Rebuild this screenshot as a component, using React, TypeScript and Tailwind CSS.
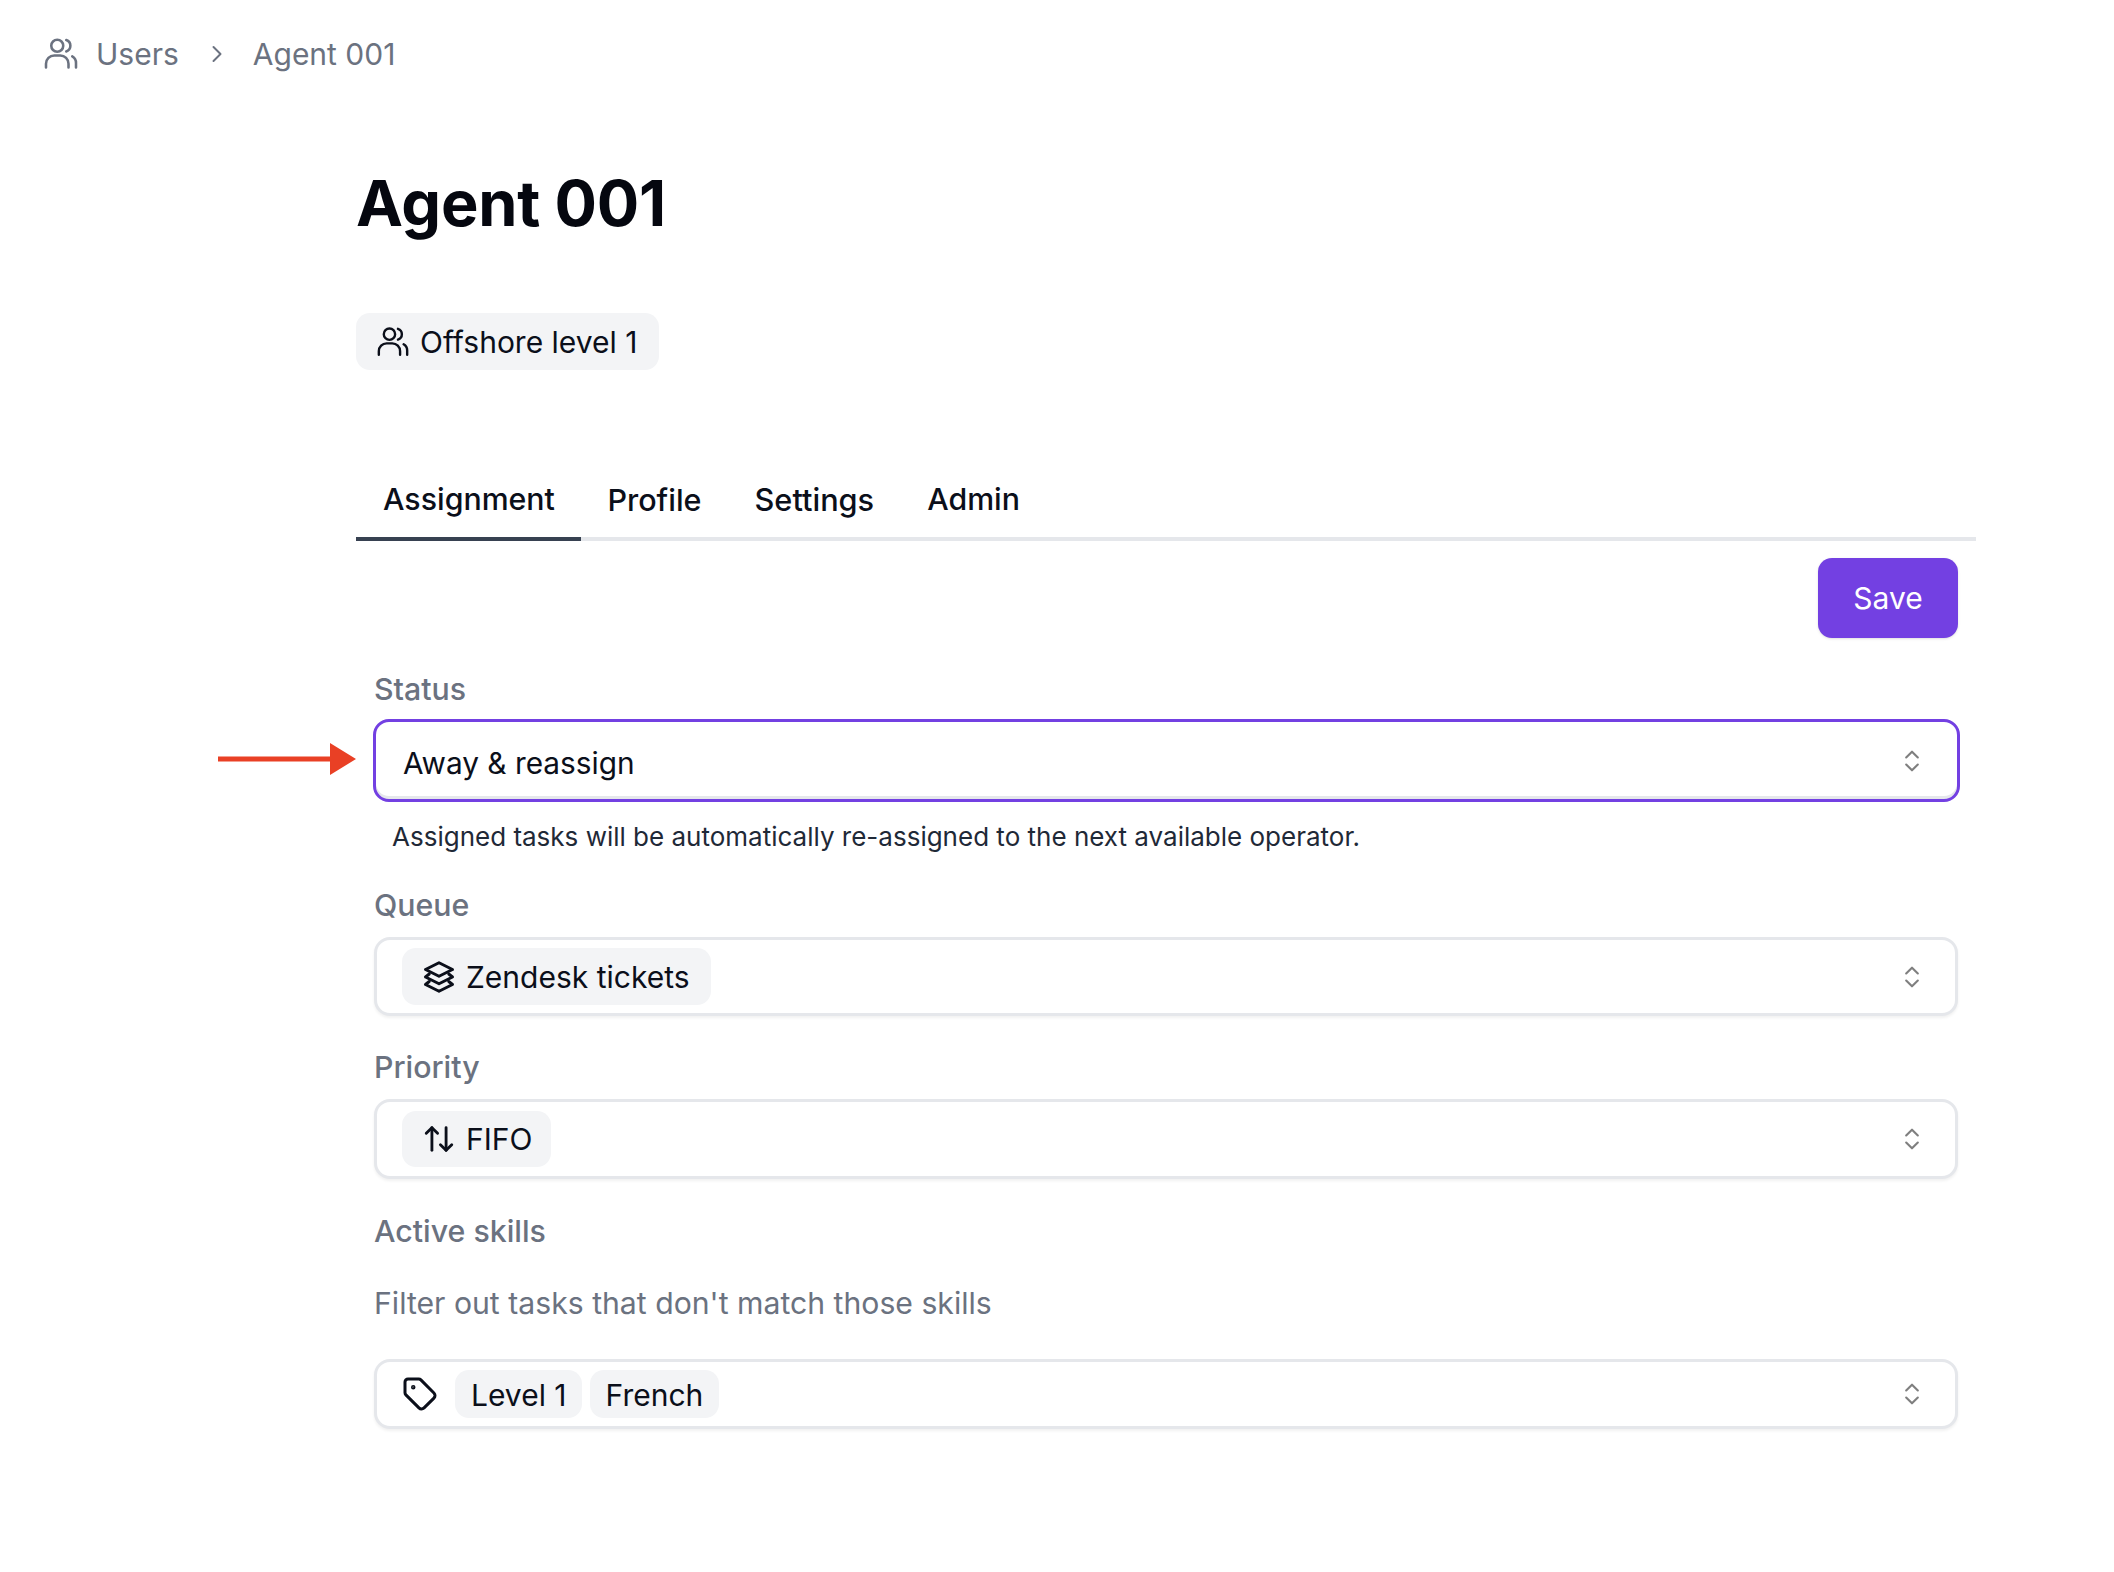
import { ArrowUpDown, ChevronRight, ChevronsUpDown, Tag } from "lucide-react";
import type { ReactNode } from "react";

function PeopleIcon({ size, className }: { size: number; className?: string }) {
  return (
    <svg className={className} width={size} height={size} viewBox="0 0 24 24" fill="none" stroke="currentColor" strokeWidth="1.7" strokeLinecap="round" strokeLinejoin="round">
      <circle cx="9.5" cy="6.5" r="4" />
      <path d="M2 21v-2.5A5.5 5.5 0 0 1 7.5 13h4a5.5 5.5 0 0 1 5.5 5.5V21" />
      <path d="M15.5 2.7a4 4 0 0 1 0 7.6" />
      <path d="M19.5 13.6A5 5 0 0 1 22 18v3" />
    </svg>
  );
}

function LayersIcon() {
  return (
    <svg width="36" height="36" viewBox="0 0 24 24" fill="none" stroke="currentColor" strokeWidth="2" strokeLinejoin="round" strokeLinecap="round">
      <path d="M12 2.5 21 7l-9 4.5L3 7l9-4.5Z" />
      <path d="M5.5 10 3 12l9 4.5 9-4.5-2.5-2" />
      <path d="M5.5 15 3 17l9 4.5 9-4.5-2.5-2" />
    </svg>
  );
}

function Chip({ children, className }: { children: ReactNode; className: string }) {
  return <span className={`flex items-center rounded-[14px] bg-[#f3f4f6] text-[30px] text-[#0b0f1a] ${className}`}>{children}</span>;
}

function SelectBox({ children, className, chevron }: { children: ReactNode; className: string; chevron: string }) {
  return (
    <div className={`flex items-center justify-between rounded-[16px] bg-white shadow-[0_2px_3px_rgba(0,0,0,0.06)] ${className}`}>
      <div className="flex items-center">{children}</div>
      <ChevronsUpDown className={`text-[#7f7f7f] ${chevron}`} size={28} strokeWidth={1.8} />
    </div>
  );
}

export default function App() {
  return (
    <div className="h-[1572px] w-full overflow-hidden bg-white font-['Inter',sans-serif]">
      <div className="flex h-[108px] items-center pl-[43px] text-[30px] text-[#6b7280]">
        <PeopleIcon size={36} />
        <span className="ml-[17px]">Users</span>
        <ChevronRight className="ml-[24px]" size={28} strokeWidth={1.7} />
        <span className="ml-[22px]">Agent 001</span>
      </div>

      <div className="ml-[356px] w-[1620px]">
        <h1 className="mt-[50px] text-[63px] font-bold leading-[90px] tracking-[-0.004em] text-[#05070f]">Agent 001</h1>

        <div className="mt-[65px] flex">
          <Chip className="h-[57px] gap-[10px] pl-[20px] pr-[22px] pt-[1px]">
            <PeopleIcon size={34} />
            Offshore level 1
          </Chip>
        </div>

        <div className="mt-[83px] flex h-[88px] border-b-[4px] border-[#e5e7eb]">
          <div className="-mb-[4px] border-b-[4px] border-[#374151] pl-[27px] pr-[26px] pt-[24px] text-[30.3px] font-medium text-[#0b0f1a]">Assignment</div>
          <div className="px-[26.5px] pt-[24px] text-[30.5px] font-medium text-[#0b0f1a]">Profile</div>
          <div className="pl-[26.5px] pr-[27px] pt-[24px] text-[30.7px] font-medium text-[#0b0f1a]">Settings</div>
          <div className="px-[26px] pt-[24px] text-[30.3px] font-medium text-[#0b0f1a]">Admin</div>
        </div>

        <div className="pl-[18px] pr-[18px]">
          <div className="mt-[17px] flex justify-end">
            <button className="h-[80px] w-[140px] rounded-[14px] bg-[#7340e2] text-[30px] text-white shadow-sm">Save</button>
          </div>

          <div className="mt-[32px] text-[30.3px] font-medium leading-[38px] text-[#6b7280]">Status</div>
          <div className="relative mt-[11px]">
            <svg className="absolute left-[-156px] top-[24px]" width="138" height="32" viewBox="0 0 138 32">
              <rect x="0" y="13.5" width="114" height="5" fill="#e94025" />
              <path d="M112 0 138 16 112 32Z" fill="#e94025" />
            </svg>
            <SelectBox className="-mx-[1px] -mr-[2px] h-[83px] border-[3px] border-[#7340e2] pl-[27px] shadow-[inset_0_-3px_0_#e5e7eb]" chevron="mr-[31px]">
              <span className="pt-[5px] text-[29.8px] text-[#0b0f1a]">Away &amp; reassign</span>
            </SelectBox>
          </div>
          <div className="mt-[18px] pl-[18px] text-[26px] leading-[34px] text-[#1f2937]">Assigned tasks will be automatically re-assigned to the next available operator.</div>

          <div className="mt-[32px] text-[30.3px] font-medium leading-[38px] text-[#6b7280]">Queue</div>
          <SelectBox className="mt-[13px] h-[79px] border-[3px] border-[#e5e7eb] pl-[25px]" chevron="mr-[29px]">
            <Chip className="h-[57px] gap-[9px] pl-[19px] pr-[21px]">
              <LayersIcon />
              <span className="pt-[1px]">Zendesk tickets</span>
            </Chip>
          </SelectBox>

          <div className="mt-[32px] text-[30.3px] font-medium leading-[38px] text-[#6b7280]">Priority</div>
          <SelectBox className="mt-[13px] h-[80px] border-[3px] border-[#e5e7eb] pl-[25px]" chevron="mr-[29px]">
            <Chip className="h-[56px] gap-[10px] pl-[20px] pr-[19px]">
              <ArrowUpDown size={34} strokeWidth={2} />
              <span className="pt-[1px]">FIFO</span>
            </Chip>
          </SelectBox>

          <div className="mt-[33px] text-[30.3px] font-medium leading-[38px] text-[#6b7280]">Active skills</div>
          <div className="mt-[34px] text-[30.2px] leading-[38px] text-[#6b7280]">Filter out tasks that don't match those skills</div>
          <SelectBox className="mt-[37px] h-[70px] border-[3px] border-[#e5e7eb] pl-[25px]" chevron="mr-[29px]">
            <Tag className="mr-[17px] text-[#0b0f1a]" size={36} strokeWidth={2} />
            <Chip className="mr-[8px] h-[48px] pl-[16px] pr-[15px]">
              <span className="pt-[2px]">Level 1</span>
            </Chip>
            <Chip className="h-[48px] px-[16px]">
              <span className="pt-[2px]">French</span>
            </Chip>
          </SelectBox>
        </div>
      </div>
    </div>
  );
}
